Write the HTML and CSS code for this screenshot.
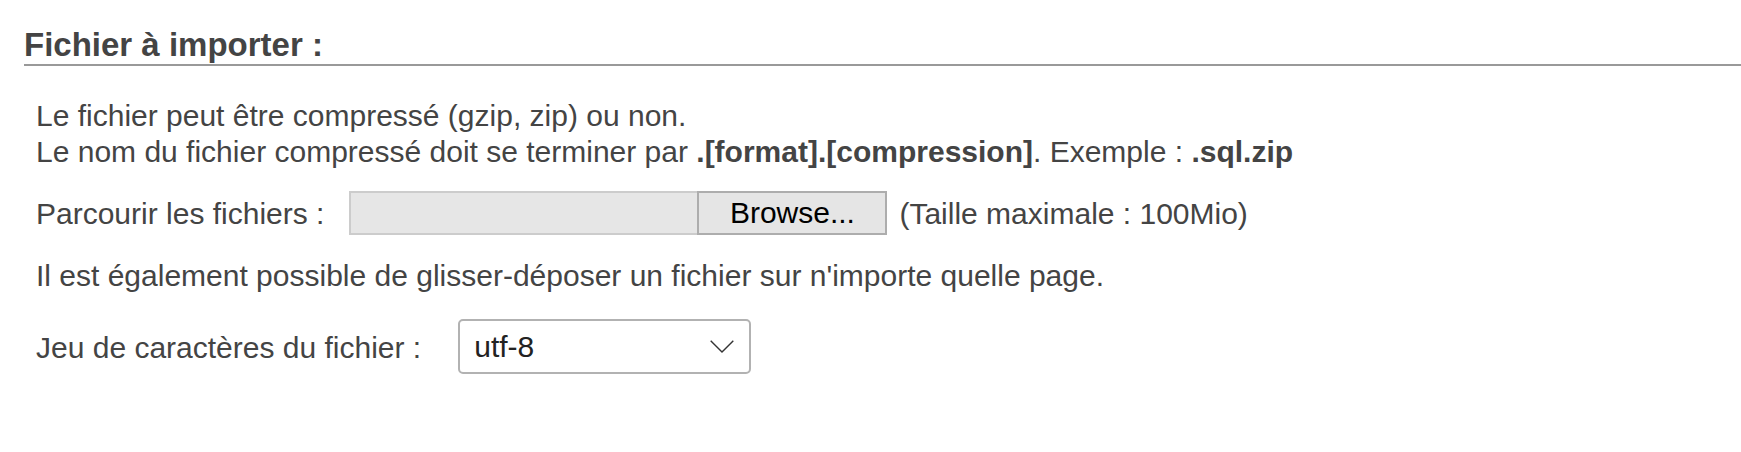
FILE: index.html
```html
<!DOCTYPE html>
<html lang="fr">
<head>
<meta charset="utf-8">
<title>Importer</title>
<link rel="stylesheet" href="styles.css">
</head>
<body>
<div class="import">
  <h3 class="import__title">Fichier à importer :</h3>
  <div class="import__body">
    <p class="import__note">Le fichier peut être compressé (gzip, zip) ou non.<br>Le nom du fichier compressé doit se terminer par <b>.[format].[compression]</b>. Exemple : <b>.sql.zip</b></p>
    <div class="row row--file">
      <label class="row__label row__label--file">Parcourir les fichiers :</label>
      <div class="file">
        <span class="file__field"></span>
        <button class="file__btn" type="button">Browse...</button>
      </div>
      <span class="row__hint">(Taille maximale : 100Mio)</span>
    </div>
    <p class="import__drag">Il est également possible de glisser-déposer un fichier sur n'importe quelle page.</p>
    <div class="row row--select">
      <label class="row__label row__label--select">Jeu de caractères du fichier :</label>
      <div class="select">
        <span class="select__value">utf-8</span>
        <svg class="select__chevron" width="24" height="13" viewBox="0 0 24 13"><polyline points="0.7,0.7 12,12 23.3,0.7" fill="none" stroke="#333" stroke-width="1.4"/></svg>
      </div>
    </div>
  </div>
</div>
</body>
</html>
```
FILE: styles.css
```css
html, body {
  margin: 0;
  padding: 0;
  background: #fff;
}

body {
  font-family: "Liberation Sans", Arial, sans-serif;
  color: #444;
}

.import {
  padding: 26px 0 0 24px;
}

.import__title {
  margin: 0;
  font-size: 33px;
  line-height: 38px;
  font-weight: bold;
  color: #444;
  border-bottom: 2px solid #999;
}

.import__body {
  padding-left: 12px;
  font-size: 30px;
  line-height: 37px;
}

.import__note {
  margin: 32px 0 0;
  line-height: 36px;
}

.import__note b {
  font-weight: bold;
}

.row {
  display: flex;
  align-items: center;
}

.row--file {
  margin-top: 21px;
  height: 44px;
}

.row__label--file {
  margin-right: 25px;
}

.file {
  display: flex;
  height: 44px;
}

.file__field {
  width: 348px;
  box-sizing: border-box;
  background: #e6e6e6;
  border: 2px solid #cccccc;
  border-right: none;
}

.file__btn {
  width: 190px;
  height: 44px;
  box-sizing: border-box;
  margin: 0;
  padding: 0;
  border: 2px solid #adadad;
  background: #e5e5e5;
  color: #000;
  font-family: "Liberation Sans", Arial, sans-serif;
  font-size: 30px;
  line-height: 1;
}

.row__hint {
  margin-left: 12px;
}

.import__drag {
  margin: 22px 0 0;
}

.row--select {
  margin-top: 25px;
}

.row__label--select {
  margin-right: 37px;
  padding-top: 2px;
}

.select {
  width: 293px;
  height: 55px;
  box-sizing: border-box;
  border: 2px solid #b2b2b2;
  border-radius: 5px;
  display: flex;
  align-items: center;
  justify-content: space-between;
  padding: 0 15px 0 14px;
  color: #222;
}

.select__chevron {
  display: block;
}
```
